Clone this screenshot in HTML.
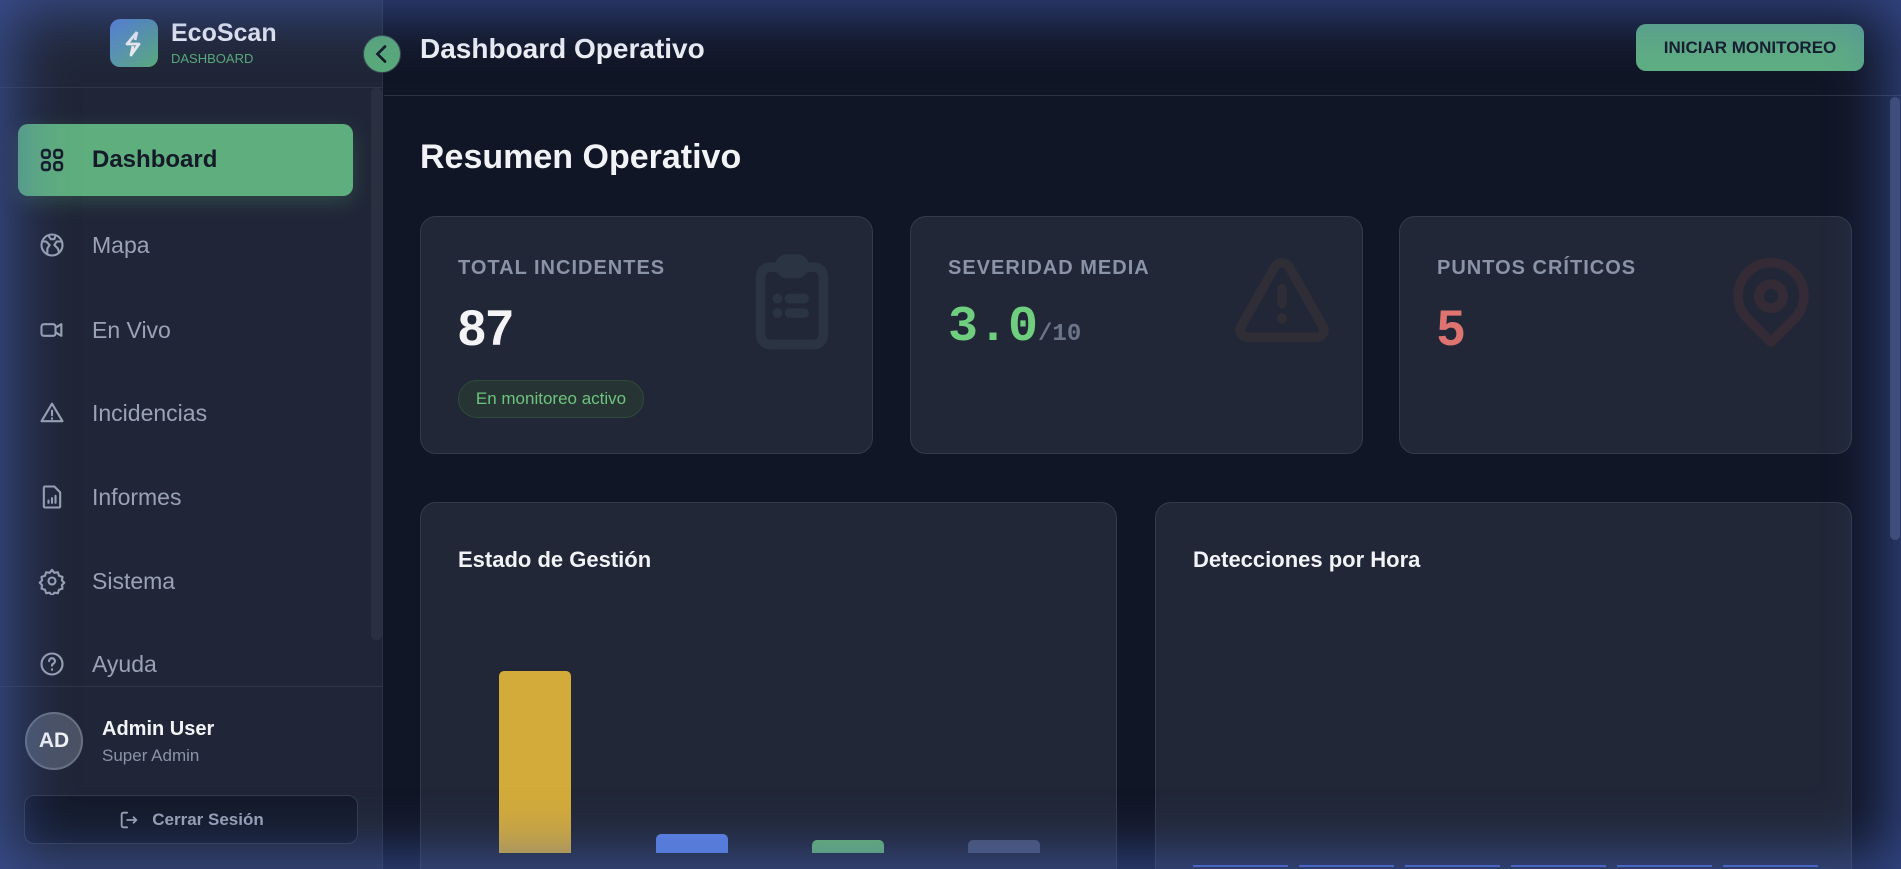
<!DOCTYPE html>
<html><head><meta charset="utf-8"><style>
*{box-sizing:border-box;margin:0;padding:0}
html,body{width:1901px;height:869px;overflow:hidden}
body{background:#111626;font-family:"Liberation Sans",sans-serif}
#root{position:relative;width:1901px;height:869px;overflow:hidden;background:#111626}
.side{position:absolute;left:0;top:0;width:383px;height:869px;background:#202637;border-right:1px solid #2c3343}
.abs{position:absolute}
.nav{position:absolute;left:38px;font-size:23px;color:#9aa3b5;display:flex;align-items:center;height:30px}
.nav svg{width:28px;height:28px;flex-shrink:0;margin-right:26px;stroke:#9aa3b5;fill:none;stroke-width:1.8;stroke-linecap:round;stroke-linejoin:round}
.card{position:absolute;background:#212737;border:1px solid #333a4a;border-radius:16px}
.lbl{position:absolute;left:37px;top:40px;font-size:20px;font-weight:bold;color:#8a93a8;letter-spacing:1px}
.val{position:absolute;left:37px;top:82px;font-size:50px;font-weight:bold}
.ico{position:absolute;right:22px;top:26px;width:116px;height:116px;fill:none;stroke-width:2;stroke-linecap:round;stroke-linejoin:round}
.vig{position:absolute;left:0;top:0;width:1901px;height:869px;pointer-events:none;box-shadow:inset 0 0 60px 10px rgba(70,100,190,.65)}
</style></head><body><div id="root">
<div class="side">
  <div class="abs" style="left:110px;top:19px;width:48px;height:48px;border-radius:10px;background:linear-gradient(135deg,#5a86d8,#5aaa7a)">
    <svg width="48" height="48" viewBox="0 0 24 24" fill="none" stroke="#f0f0f0" stroke-width="1.4" stroke-linejoin="round"><path d="M13.5 6.5L8.5 12.5h6l-4 5.5 1-4.5"/><path d="M13.5 6.5l-1 4"/></svg>
  </div>
  <div class="abs" style="left:171px;top:19px;font-size:25px;font-weight:bold;color:#eef0f4">EcoScan</div>
  <div class="abs" style="left:171px;top:51px;font-size:13px;color:#5aaa7a">DASHBOARD</div>
  <div class="abs" style="left:0;top:87px;width:383px;height:1px;background:#2f3646"></div>
  <div class="abs" style="left:371px;top:88px;width:11px;height:552px;background:#2a3040;border-radius:5px"></div>
  <div class="abs" style="left:18px;top:124px;width:335px;height:72px;border-radius:10px;background:#5fae7e;box-shadow:0 6px 20px rgba(95,174,126,.25)"></div>
  <div class="nav" style="top:145px;color:#141a28;font-weight:bold;font-size:24px"><svg viewBox="0 0 24 24" style="stroke:#141a28;stroke-width:2.2"><rect x="3.5" y="3.5" width="6.5" height="6.5" rx="2.2"/><rect x="14" y="3.5" width="6.5" height="6.5" rx="2.2"/><rect x="3.5" y="14" width="6.5" height="6.5" rx="2.2"/><rect x="14" y="14" width="6.5" height="6.5" rx="2.2"/></svg>Dashboard</div>
  <div class="nav" style="top:230px"><svg viewBox="0 0 24 24"><circle cx="12" cy="12" r="9"/><path d="M4 9h3l3 3-2 3v5M20 9h-4l-2 3 3 3 1 3M9 4l2 3h3l1-3"/></svg>Mapa</div>
  <div class="nav" style="top:315px"><svg viewBox="0 0 24 24"><rect x="3" y="7" width="12" height="10" rx="2"/><path d="M15 10l5-3v10l-5-3"/></svg>En Vivo</div>
  <div class="nav" style="top:398px"><svg viewBox="0 0 24 24"><path d="M12 4L3 19h18z"/><path d="M12 10v4M12 16.5v.5"/></svg>Incidencias</div>
  <div class="nav" style="top:482px"><svg viewBox="0 0 24 24"><path d="M6 3h8l5 5v12a1 1 0 0 1-1 1H6a1 1 0 0 1-1-1V4a1 1 0 0 1 1-1z"/><path d="M9 17v-2M12 17v-4M15 17v-6"/></svg>Informes</div>
  <div class="nav" style="top:566px"><svg viewBox="0 0 24 24"><circle cx="12" cy="12" r="3"/><path d="M12 2.5l2 2.5 3-.5 1 3 3 1-.5 3 2 2-2 2 .5 3-3 1-1 3-3-.5-2 2.5-2-2.5-3 .5-1-3-3-1 .5-3-2-2 2-2-.5-3 3-1 1-3 3 .5z"/></svg>Sistema</div>
  <div class="nav" style="top:649px"><svg viewBox="0 0 24 24"><circle cx="12" cy="12" r="9"/><path d="M9.5 9.5a2.5 2.5 0 1 1 3.5 2.3c-.7.3-1 .9-1 1.7M12 16.5v.5"/></svg>Ayuda</div>
  <div class="abs" style="left:0;top:686px;width:383px;height:1px;background:#2f3646"></div>
  <div class="abs" style="left:25px;top:712px;width:58px;height:58px;border-radius:50%;background:#4a5264;border:2px solid #6a7284;color:#f4f4f6;font-weight:bold;font-size:21px;text-align:center;line-height:54px">AD</div>
  <div class="abs" style="left:102px;top:718px;font-size:20px;font-weight:bold;color:#f2f3f6">Admin User</div>
  <div class="abs" style="left:102px;top:746px;font-size:17px;color:#8a93a8">Super Admin</div>
  <div class="abs" style="left:24px;top:795px;width:334px;height:49px;border-radius:10px;background:#141a2a;border:1px solid #343b4b;display:flex;align-items:center;justify-content:center;color:#9aa3b5;font-weight:bold;font-size:17px">
    <svg width="22" height="22" viewBox="0 0 24 24" fill="none" stroke="#9aa3b5" stroke-width="2" stroke-linecap="round" stroke-linejoin="round" style="margin-right:12px"><path d="M10 4H6a2 2 0 0 0-2 2v12a2 2 0 0 0 2 2h4M10 12h10M17 9l3 3-3 3"/></svg>Cerrar Sesión</div>
</div>
<div class="abs" style="left:363px;top:35px;width:38px;height:38px;border-radius:50%;background:#5aaa7a;border:1px solid #3c4a52">
  <svg width="36" height="36" viewBox="0 0 24 24" fill="none" stroke="#141a28" stroke-width="1.8" stroke-linecap="round"><path d="M14 7l-5 5 5 5"/></svg></div>
<div class="abs" style="left:384px;top:95px;width:1517px;height:1px;background:#2c3343"></div>
<div class="abs" style="left:420px;top:33px;font-size:28px;font-weight:bold;color:#f2f3f6">Dashboard Operativo</div>
<div class="abs" style="left:1636px;top:24px;width:228px;height:47px;border-radius:10px;background:#5fae82;color:#141a28;font-weight:bold;font-size:17px;text-align:center;line-height:47px">INICIAR MONITOREO</div>
<div class="abs" style="left:1890px;top:97px;width:10px;height:443px;background:#3a4256;border-radius:5px"></div>
<div class="abs" style="left:420px;top:138px;font-size:34px;font-weight:bold;color:#f2f3f6">Resumen Operativo</div>

<div class="card" style="left:420px;top:216px;width:453px;height:238px">
  <div class="lbl">TOTAL INCIDENTES</div>
  <div class="val" style="color:#f4f4f6">87</div>
  <div class="abs" style="left:37px;top:163px;width:186px;height:38px;border-radius:19px;background:#263534;border:1px solid #2f4a3a;color:#6ec47e;font-size:17px;text-align:center;line-height:36px">En monitoreo activo</div>
  <svg class="ico" viewBox="0 0 24 24" stroke="#2b3442" style="stroke-width:2"><rect x="5.5" y="5" width="13" height="16" rx="2"/><rect x="9.5" y="3.3" width="5" height="3" rx="1.5"/><path d="M9 11.5h.01M11.5 11.5h3M9 14.5h.01M11.5 14.5h3"/></svg>
</div>
<div class="card" style="left:910px;top:216px;width:453px;height:238px">
  <div class="lbl">SEVERIDAD MEDIA</div>
  <div class="val" style="font-family:'Liberation Mono',monospace;color:#6fcf7f">3.0<span style="font-size:24px;color:#6b7488">/10</span></div>
  <svg class="ico" viewBox="0 0 24 24" stroke="#2f2d36" style="stroke-width:2"><path d="M10.5 5a1.7 1.7 0 0 1 3 0l7 12.3a1.5 1.5 0 0 1-1.3 2.2H4.8a1.5 1.5 0 0 1-1.3-2.2z"/><path d="M12 9.5v3M12 15.5v.2"/></svg>
</div>
<div class="card" style="left:1399px;top:216px;width:453px;height:238px">
  <div class="lbl">PUNTOS CRÍTICOS</div>
  <div class="val" style="color:#de7470">5</div>
  <svg class="ico" viewBox="0 0 24 24" stroke="#352b36" style="stroke-width:2"><path d="M12 20.5l-4.8-4.8a6.8 6.8 0 1 1 9.6 0z"/><circle cx="12" cy="11" r="2.5"/></svg>
</div>

<div class="card" style="left:420px;top:502px;width:697px;height:400px">
  <div class="abs" style="left:37px;top:44px;font-size:22px;font-weight:bold;color:#f2f3f6">Estado de Gestión</div>
  <div class="abs" style="left:78px;top:168px;width:72px;height:182px;border-radius:5px 5px 0 0;background:#d3ab3a"></div>
  <div class="abs" style="left:235px;top:331px;width:72px;height:19px;border-radius:5px 5px 0 0;background:#5b82e2"></div>
  <div class="abs" style="left:391px;top:337px;width:72px;height:13px;border-radius:5px 5px 0 0;background:#66b273"></div>
  <div class="abs" style="left:547px;top:337px;width:72px;height:13px;border-radius:5px 5px 0 0;background:#4a5470"></div>
</div>
<div class="card" style="left:1155px;top:502px;width:697px;height:400px">
  <div class="abs" style="left:37px;top:44px;font-size:22px;font-weight:bold;color:#f2f3f6">Detecciones por Hora</div>
  <div class="abs" style="left:37px;top:362px;width:628px;height:2px;background:repeating-linear-gradient(90deg,#4a66c8 0 95px,transparent 95px 106px)"></div>
</div>
<div class="vig"></div>
</div></body></html>
